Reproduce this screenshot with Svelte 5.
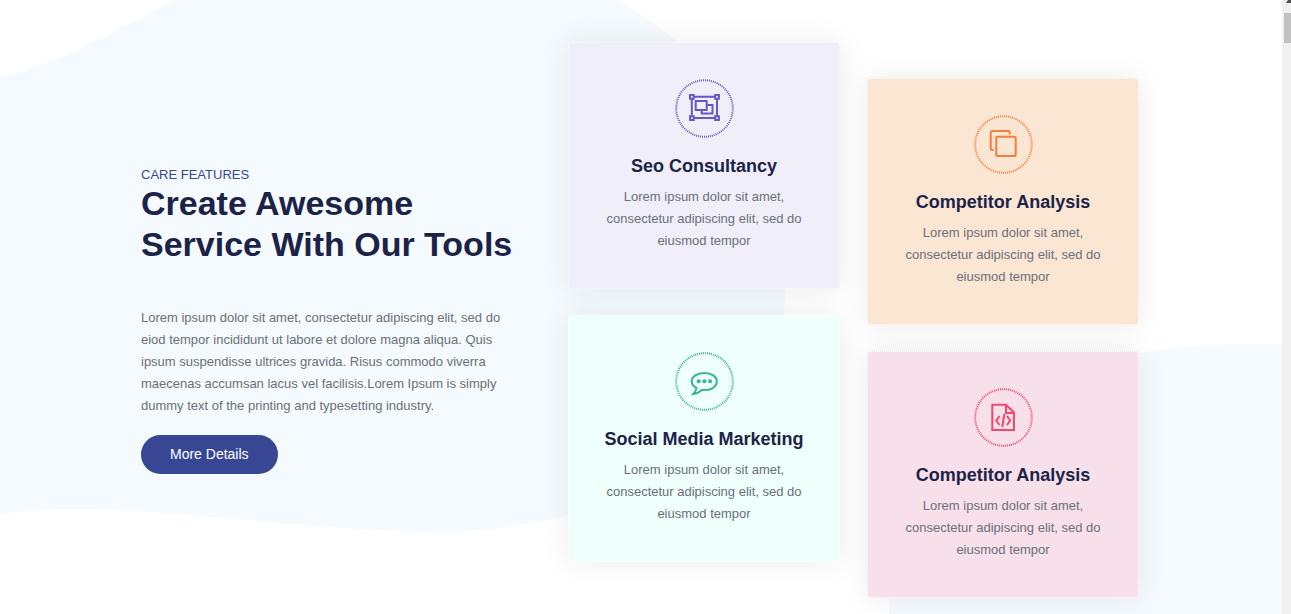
<script>
  const columns = [
    [
      { title: 'Seo Consultancy', icon: 'group', tone: 'violet' },
      { title: 'Social Media Marketing', icon: 'chat', tone: 'mint' }
    ],
    [
      { title: 'Competitor Analysis', icon: 'copy', tone: 'orange' },
      { title: 'Competitor Analysis', icon: 'code', tone: 'pink' }
    ]
  ];
</script>

<div class="page">
  <main>
    <svg class="waves" viewBox="0 0 1282 614" preserveAspectRatio="none" aria-hidden="true">
      <path d="M0 78C58 63 112 34 174 0H617C655 20 735 80 765 150C788 205 787 260 785 288C785 300 784 310 783 320C760 430 660 490 568 515C515 530 455 533 400 531C290 528 180 509 75 509C45 509 20 511 0 514Z" />
      <path d="M889 614C885 500 990 390 1139 353C1185 345 1235 343 1282 344V614Z" />
    </svg>

    <section class="features">
      <div class="intro">
        <span class="eyebrow">CARE FEATURES</span>
        <h2>Create Awesome Service With Our Tools</h2>
        <p>
          Lorem ipsum dolor sit amet, consectetur adipiscing elit, sed do eiod tempor incididunt ut
          labore et dolore magna aliqua. Quis ipsum suspendisse ultrices gravida. Risus commodo
          viverra maecenas accumsan lacus vel facilisis.Lorem Ipsum is simply dummy text of the
          printing and typesetting industry.
        </p>
        <a class="more" href="#details">More Details</a>
      </div>

      {#each columns as cards}
        <div class="stack">
          {#each cards as card}
            <article class="card {card.tone}">
              <svg class="badge" viewBox="0 0 59 59" aria-hidden="true">
                <circle class="ring" cx="29.500" cy="29.500" r="28.300" pathLength="178" />
                <g transform="translate(13 13)">
                  {#if card.icon === 'group'}
                    <path d="M3.800 4.800H29V26H3.800Z" />
                    <path d="M7.700 9H18.700V18H7.700ZM19 13H24.500V21.500H13.700V18" />
                    <path class="handle" d="M2 3H5.700V6.700H2ZM27.200 3H30.900V6.700H27.200ZM2 24.200H5.700V27.900H2ZM27.200 24.200H30.900V27.900H27.200Z" />
                  {:else if card.icon === 'copy'}
                    <path d="M6.500 22H5.200Q3.700 22 3.700 20.500V4.500Q3.700 3 5.200 3H21.200Q22.700 3 22.700 4.500V6.500" />
                    <rect x="9.300" y="8.700" width="19.400" height="19.400" rx="1.500" />
                  {:else if card.icon === 'chat'}
                    <path d="M16.500 8C9 8 3.700 11.500 3.700 16.300C3.700 19.200 5.500 21.500 8.500 23C8.200 25.500 7 27.300 5.300 29C8.800 28.500 11.800 27 14 25C22.800 25.700 28.800 22 28.800 16.300C28.800 11.500 23.500 8 16.500 8Z" />
                    <g class="dots">
                      <circle cx="10.700" cy="16.200" r="2" />
                      <circle cx="16.400" cy="16.200" r="2" />
                      <circle cx="22" cy="16.200" r="2" />
                    </g>
                  {:else}
                    <path d="M5.300 3.700H19L27 11.500V29H5.300ZM19 4V12H26.500" />
                    <path d="M12.500 15L9.300 19.500L12.500 24M20 15L23.200 19.500L20 24M17.300 13L15.300 26" />
                  {/if}
                </g>
              </svg>
              <h3>{card.title}</h3>
              <p>Lorem ipsum dolor sit amet, consectetur adipiscing elit, sed do eiusmod tempor</p>
            </article>
          {/each}
        </div>
      {/each}
    </section>
  </main>
  <div class="rail" aria-hidden="true"><span class="arrow"></span><span class="thumb"></span></div>
</div>

<style>
  :global(body) {
    margin: 0;
    overflow: hidden;
    background: #fff;
    font-family: 'Liberation Sans', Arial, sans-serif;
  }
  .page {
    display: flex;
    min-height: 100vh;
  }
  main {
    position: relative;
    flex: 1;
    min-width: 0;
  }
  .waves {
    position: absolute;
    inset: 0;
    width: 100%;
    height: 100%;
    fill: #f4fafe;
  }
  .features {
    position: relative;
    box-sizing: border-box;
    max-width: 1000px;
    margin: 0 auto;
    padding: 42px 2px 16px 0;
    display: grid;
    grid-template-columns: minmax(0, 1fr) 272px 272px;
    column-gap: 27px;
  }
  .intro {
    padding-top: 124px;
  }
  .eyebrow {
    display: block;
    font-size: 13px;
    line-height: 17px;
    color: #374794;
  }
  h2 {
    margin: 0;
    font-size: 34px;
    line-height: 41px;
    color: #1c2348;
  }
  p {
    margin: 0;
    font-size: 13px;
    line-height: 22px;
    color: #6b7079;
  }
  .intro p {
    margin-top: 42px;
    max-width: 380px;
  }
  .more {
    display: inline-block;
    margin-top: 18px;
    padding: 0 29px;
    border-radius: 20px;
    background: #374794;
    color: #fff;
    font-size: 14px;
    line-height: 39px;
    text-decoration: none;
  }
  .stack {
    display: flex;
    flex-direction: column;
    gap: 26px;
  }
  .stack:last-child {
    padding-top: 36px;
  }
  .card {
    box-sizing: border-box;
    padding: 36px 28px;
    border: 1px dotted #fff;
    border-radius: 4px;
    box-shadow: 0 0 30px rgba(0, 0, 0, 0.08);
    text-align: center;
  }
  .badge {
    display: block;
    width: 59px;
    height: 59px;
    margin: 0 auto;
    fill: none;
    stroke: currentColor;
    stroke-width: 2;
  }
  .ring {
    stroke-dasharray: 1 1;
  }
  .dots {
    fill: currentColor;
    stroke: none;
  }
  h3 {
    margin: 17px 0 9px;
    font-size: 18px;
    line-height: 22px;
    color: #1c2348;
  }
  .violet { background: #f0eef9; }
  .violet .badge { color: #6659c4; }
  .violet .handle { fill: #f0eef9; }
  .mint { background: #effffc; }
  .mint .badge { color: #36b295; }
  .orange { background: #fbe6d3; }
  .orange .badge { color: #f47d3d; }
  .pink { background: #f7e0ea; }
  .pink .badge { color: #f34770; }
  .rail {
    flex: 0 0 9px;
    background: #f0f0f0;
  }
  .arrow {
    display: block;
    width: 5px;
    height: 3px;
    margin: 0 0 10px auto;
    background: #505050;
    clip-path: polygon(2px 0, 100% 0, 100% 100%, 0 100%);
  }
  .thumb {
    display: block;
    height: 30px;
    margin-left: 2px;
    background: #c1c1c1;
  }
</style>
